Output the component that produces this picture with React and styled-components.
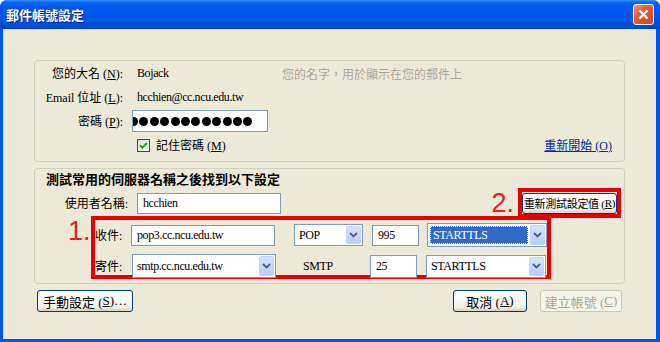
import React from 'react';
import styled, { createGlobalStyle, css } from 'styled-components';

const serif = `"Liberation Serif", "Noto Sans CJK TC", serif`;
const cjk = `"Noto Sans CJK TC", "Liberation Sans", sans-serif`;

const GlobalStyle = createGlobalStyle`
  html, body { margin: 0; padding: 0; background: #ffffff; }
  body { font-family: ${serif}; font-size: 12px; }
  * { box-sizing: border-box; }
`;

function Chevron() {
  return (
    <svg width="9" height="6" viewBox="0 0 9 6">
      <path d="M1 1 L4.5 4.5 L8 1" fill="none" stroke="#4d6185" strokeWidth="1.8" />
    </svg>
  );
}

function Check() {
  return (
    <svg width="9" height="9" viewBox="0 0 9 9">
      <path d="M1 4.2 L3.4 6.6 L8 2" fill="none" stroke="#21a121" strokeWidth="2" />
    </svg>
  );
}

function Select({ value, w, h, ml, selected }) {
  return (
    <SelectBox $w={w} $h={h} $ml={ml}>
      <SelectText $selected={selected}>{value}</SelectText>
      <DropBtn>
        <Chevron />
      </DropBtn>
    </SelectBox>
  );
}

export default function App() {
  const dots = Array.from({ length: 12 });
  return (
    <>
      <GlobalStyle />
      <Window>
        <TitleBar>
          <Title>郵件帳號設定</Title>
          <CloseBtn>
            <svg width="11" height="11" viewBox="0 0 11 11">
              <path d="M1.5 1.5 L9.5 9.5 M9.5 1.5 L1.5 9.5" stroke="#fff" strokeWidth="2.2" />
            </svg>
          </CloseBtn>
        </TitleBar>
        <Body>
          <Group>
            <FormRow>
              <Label>您的大名 (<U>N</U>):</Label>
              <Value $w={145}>Bojack</Value>
              <Hint>您的名字，用於顯示在您的郵件上</Hint>
            </FormRow>
            <FormRow>
              <Label>Email 位址 (<U>L</U>):</Label>
              <Value>hcchien@cc.ncu.edu.tw</Value>
            </FormRow>
            <FormRow>
              <Label>密碼 (<U>P</U>):</Label>
              <PassBox>
                <Dots>
                  {dots.map((_, i) => (
                    <Dot key={i} />
                  ))}
                </Dots>
              </PassBox>
            </FormRow>
            <FormRow>
              <CheckBox>
                <Check />
              </CheckBox>
              <CheckLabel>記住密碼 (<U>M</U>)</CheckLabel>
              <Link>重新開始 (<span>O</span>)</Link>
            </FormRow>
          </Group>

          <Group $mt={6}>
            <GroupTitle>測試常用的伺服器名稱之後找到以下設定</GroupTitle>
            <UserRow>
              <UserLabel>使用者名稱:</UserLabel>
              <TextBox $w={144} $h={21} $ml={9}>hcchien</TextBox>
              <Annot $right>2.</Annot>
              <RetestBox>
                <SmallButton>重新測試設定值 (<U>R</U>)</SmallButton>
              </RetestBox>
            </UserRow>
            <ServerRow>
              <Annot>1.</Annot>
              <ServerBox>
                <ServerLine>
                  <ServerLabel>收件:</ServerLabel>
                  <TextBox $w={144} $h={21}>pop3.cc.ncu.edu.tw</TextBox>
                  <Select value="POP" w={69} h={22} ml={19} />
                  <TextBox $w={47} $h={21} $ml={9}>995</TextBox>
                  <Select value="STARTTLS" w={120} h={24} ml={8} selected />
                </ServerLine>
                <ServerLine $mt={7}>
                  <ServerLabel>寄件:</ServerLabel>
                  <Select value="smtp.cc.ncu.edu.tw" w={144} h={24} />
                  <Protocol>SMTP</Protocol>
                  <TextBox $w={47} $h={23}>25</TextBox>
                  <Select value="STARTTLS" w={120} h={23} ml={9} />
                </ServerLine>
              </ServerBox>
            </ServerRow>
          </Group>

          <Footer>
            <Button $w={96}>手動設定 (<U>S</U>)…</Button>
            <Button $w={74} $ml="auto">取消 (<U>A</U>)</Button>
            <Button $w={82} $ml={13} disabled>建立帳號 (<U>C</U>)</Button>
          </Footer>
        </Body>
      </Window>
    </>
  );
}

const Window = styled.div`
  width: 660px;
  height: 342px;
  display: flex;
  flex-direction: column;
  background: #0055ea;
  border-radius: 7px 7px 0 0;
  overflow: hidden;
`;

const TitleBar = styled.div`
  height: 29px;
  flex: none;
  display: flex;
  align-items: center;
  padding: 0 6px 0 6px;
  background: linear-gradient(
    to bottom,
    #3d95ff 0%,
    #0a66f5 8%,
    #0058ee 25%,
    #0055e6 60%,
    #004fdc 85%,
    #0047d0 95%,
    #0040c0 100%
  );
`;

const Title = styled.div`
  font-family: ${cjk};
  font-weight: bold;
  font-size: 13px;
  color: #ffffff;
  text-shadow: 1px 1px 0 #0a1e8c;
`;

const CloseBtn = styled.div`
  margin-left: auto;
  width: 21px;
  height: 21px;
  border: 1px solid #ffffff;
  border-radius: 3px;
  background: linear-gradient(135deg, #f09a80 0%, #e2603f 35%, #cc4222 100%);
  display: flex;
  align-items: center;
  justify-content: center;
`;

const Body = styled.div`
  flex: 1;
  margin: 0 4px 3px 3px;
  background: #ece9d8;
  padding: 31px 31px 0 31px;
  display: flex;
  flex-direction: column;
`;

const Group = styled.div`
  border: 1px solid #d0d0bf;
  border-radius: 4px;
  margin-top: ${(p) => p.$mt || 0}px;
  padding-bottom: 4px;
`;

const FormRow = styled.div`
  display: flex;
  align-items: center;
  height: 24px;
`;

const Label = styled.div`
  width: 88px;
  text-align: right;
  font-size: 12px;
  color: #000;
  white-space: nowrap;
`;

const U = styled.span`
  text-decoration: underline;
`;

const Value = styled.div`
  margin-left: 14px;
  width: ${(p) => (p.$w ? `${p.$w}px` : 'auto')};
  font-size: 12px;
  letter-spacing: -0.4px;
  color: #000;
`;

const Hint = styled.div`
  font-family: ${cjk};
  font-size: 12px;
  color: #aca899;
`;

const PassBox = styled.div`
  margin-left: 9px;
  width: 136px;
  height: 22px;
  border: 1px solid #7f9db9;
  background: #ffffff;
  overflow: hidden;
  display: flex;
  align-items: center;
`;

const Dots = styled.div`
  display: flex;
  margin-left: -4px;
`;

const Dot = styled.span`
  width: 9px;
  height: 9px;
  border-radius: 50%;
  background: #000;
  margin-right: 1.4px;
  flex: none;
`;

const CheckBox = styled.div`
  margin-left: 102px;
  width: 13px;
  height: 13px;
  border: 1px solid #1c5180;
  background: linear-gradient(135deg, #dcdcd7, #ffffff);
  display: flex;
  align-items: center;
  justify-content: center;
`;

const CheckLabel = styled.div`
  margin-left: 6px;
  font-size: 12px;
`;

const Link = styled.div`
  margin-left: auto;
  margin-right: 12px;
  font-size: 12px;
  color: #0b2a9e;
  text-decoration: underline;
`;

const GroupTitle = styled.div`
  height: 19px;
  line-height: 19px;
  padding-left: 11px;
  font-family: ${cjk};
  font-weight: bold;
  font-size: 13px;
  color: #000;
`;

const UserRow = styled.div`
  display: flex;
  align-items: center;
  height: 30px;
  padding-right: 3px;
`;

const UserLabel = styled.div`
  width: 93px;
  text-align: right;
  font-size: 12px;
`;

const TextBox = styled.div`
  flex: none;
  width: ${(p) => p.$w}px;
  height: ${(p) => p.$h}px;
  margin-left: ${(p) => p.$ml || 0}px;
  border: 1px solid #7f9db9;
  background: #ffffff;
  display: flex;
  align-items: center;
  padding-left: 5px;
  font-size: 12px;
  letter-spacing: -0.4px;
  color: #000;
  white-space: nowrap;
  overflow: hidden;
`;

const Annot = styled.div`
  font-family: "Liberation Sans", Arial, sans-serif;
  font-size: 27px;
  line-height: 27px;
  color: #e62020;
  ${(p) =>
    p.$right
      ? css`
          margin-left: auto;
          margin-right: 4px;
        `
      : css`
          width: 23px;
          margin-left: 33px;
          margin-top: 2px;
        `}
`;

const RetestBox = styled.div`
  border: 4px solid #e60000;
  padding: 1px 0;
  height: 30px;
  display: flex;
  align-items: center;
`;

const SmallButton = styled.div`
  width: 95px;
  height: 21px;
  border: 1px solid #003c74;
  border-radius: 3px;
  background: linear-gradient(#ffffff, #f3f2ec 80%, #d6d0c5);
  display: flex;
  align-items: center;
  justify-content: center;
  font-family: ${serif};
  font-size: 11px;
  letter-spacing: -0.3px;
  white-space: nowrap;
`;

const ServerRow = styled.div`
  display: flex;
  align-items: flex-start;
  margin-top: -2px;
`;

const ServerBox = styled.div`
  width: 460px;
  height: 63px;
  border: 4px solid #e60000;
  padding-top: 3px;
`;

const ServerLine = styled.div`
  display: flex;
  align-items: center;
  margin-top: ${(p) => p.$mt || 0}px;
`;

const ServerLabel = styled.div`
  width: 37px;
  font-size: 12px;
`;

const Protocol = styled.div`
  width: 94px;
  padding-left: 27px;
  font-size: 12px;
  letter-spacing: -0.4px;
`;

const SelectBox = styled.div`
  flex: none;
  display: flex;
  width: ${(p) => p.$w}px;
  height: ${(p) => p.$h}px;
  margin-left: ${(p) => p.$ml || 0}px;
  border: 1px solid #7f9db9;
  background: #ffffff;
  padding: 1px;
`;

const SelectText = styled.div`
  flex: 1;
  display: flex;
  align-items: center;
  padding-left: 3px;
  font-size: 12px;
  letter-spacing: -0.4px;
  white-space: nowrap;
  overflow: hidden;
  color: #000;
  ${(p) =>
    p.$selected &&
    css`
      margin: 1px 2px 1px 1px;
      background: #316ac5;
      color: #ffffff;
      outline: 1px dotted #ffffff;
      outline-offset: -1px;
    `}
`;

const DropBtn = styled.div`
  width: 15px;
  flex: none;
  border: 1px solid #c3d3fd;
  border-radius: 2px;
  background: linear-gradient(#d6e2fe, #b9cdf8);
  display: flex;
  align-items: center;
  justify-content: center;
`;

const Footer = styled.div`
  display: flex;
  margin-top: 6px;
  padding: 0 3px;
`;

const Button = styled.div`
  width: ${(p) => p.$w}px;
  height: 22px;
  margin-left: ${(p) => (p.$ml === 'auto' ? 'auto' : `${p.$ml || 0}px`)};
  border: 1px solid #003c74;
  border-radius: 3px;
  background: linear-gradient(#ffffff, #f3f2ec 80%, #d6d0c5);
  display: flex;
  align-items: center;
  justify-content: center;
  font-family: ${serif};
  font-size: 13px;
  white-space: nowrap;
  color: #000;
  ${(p) =>
    p.disabled &&
    css`
      border-color: #c9c7ba;
      background: #f5f4ea;
      color: #aca899;
    `}
`;
